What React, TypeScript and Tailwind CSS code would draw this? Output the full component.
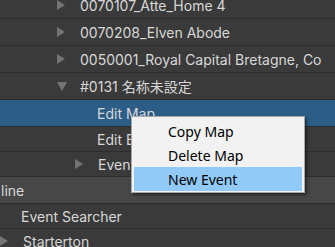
import React from "react";

type Row = {
  label: string;
  indent: number;
  h: string;
  arrow?: "right" | "down";
  selected?: boolean;
  header?: boolean;
};

const rows: Row[] = [
  { label: "0070107_Atte_Home 4", indent: 57, h: "h-[27px]", arrow: "right" },
  { label: "0070208_Elven Abode", indent: 57, h: "h-[27px]", arrow: "right" },
  { label: "0050001_Royal Capital Bretagne, Co", indent: 57, h: "h-[27px]", arrow: "right" },
  { label: "#0131 名称未設定", indent: 57, h: "h-[27px]", arrow: "down" },
  { label: "Edit Map", indent: 97, h: "h-[27px]", selected: true },
  { label: "Edit Event", indent: 97, h: "h-[25px]" },
  { label: "Event", indent: 75, h: "h-[25px]", arrow: "right" },
  { label: "line", indent: 1, h: "h-[27px]", header: true },
  { label: "Event Searcher", indent: 21, h: "h-[25px]" },
  { label: "Starterton", indent: 0, h: "h-[25px]", arrow: "right" },
];

function Arrow({ dir }: { dir: "right" | "down" }) {
  if (dir === "down") {
    return (
      <svg width="10" height="9" viewBox="0 0 10 9" className="shrink-0">
        <polygon points="0,0 10,0 5,9" fill="#747474" />
      </svg>
    );
  }
  return (
    <svg width="8" height="10" viewBox="0 0 8 10" className="shrink-0">
      <polygon points="0,0 8,5 0,10" fill="#747474" />
    </svg>
  );
}

function TreeRow({ row }: { row: Row }) {
  const bg = row.selected ? "bg-[#2c5d87]" : row.header ? "bg-[#474747]" : "bg-[#3a3a3a]";
  return (
    <div className={`${row.h} border-b border-[#2d2d2d] flex items-center ${bg}`}>
      <div className="flex items-center" style={{ paddingLeft: row.indent }}>
        {row.arrow ? (
          <span className="w-[23px] flex items-center">
            <Arrow dir={row.arrow} />
          </span>
        ) : null}
        <span className="text-[14px] text-[#d8d8d8] whitespace-nowrap font-['Inter','Noto_Sans_CJK_JP',sans-serif]">
          {row.label}
        </span>
      </div>
    </div>
  );
}

export default function App() {
  return (
    <div className="relative w-[335px] h-[247px] overflow-hidden bg-[#3a3a3a]">
      <div className="-mt-[8px]">
        {rows.map((r) => (
          <TreeRow key={r.label} row={r} />
        ))}
      </div>

      {/* context menu */}
      <div className="absolute left-[131px] top-[116px] w-[174px] bg-[#f2f2f2] border border-[#a8a8a8] shadow-[2px_2px_3px_rgba(0,0,0,0.45)] px-[2px] pt-[2px] pb-[1px] font-['Noto_Sans',sans-serif] text-[14px] text-black">
        <div className="h-[24px] flex items-center pl-[34px]">Copy Map</div>
        <div className="h-[24px] flex items-center pl-[34px]">Delete Map</div>
        <div className="h-[24px] flex items-center pl-[34px] bg-[#91c9f7]">New Event</div>
      </div>
    </div>
  );
}
